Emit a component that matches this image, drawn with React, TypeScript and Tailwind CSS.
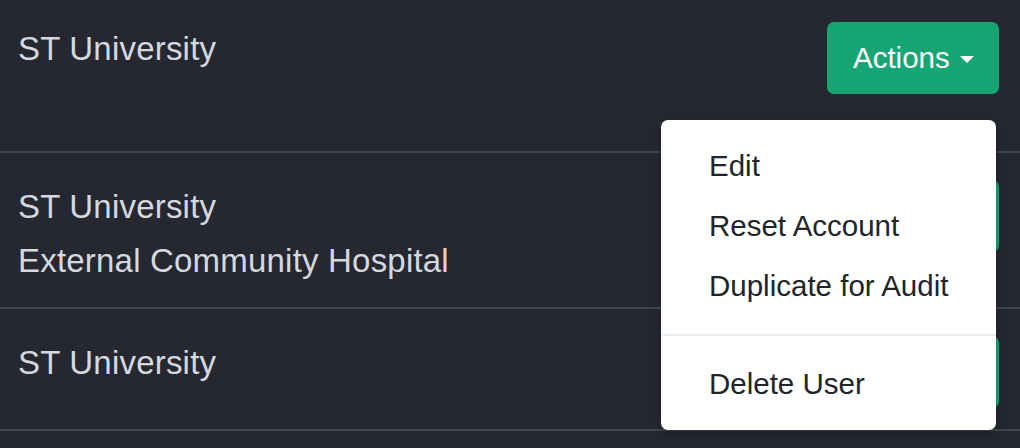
import React from 'react';

const rows = [
  { lines: ['ST University'], h: 'h-[153px] pt-[22px]' },
  { lines: ['ST University', 'External Community Hospital'], h: 'h-[156px] pt-[27px]' },
  { lines: ['ST University'], h: 'h-[122px] pt-[27px]' },
];

function ActionsButton() {
  return (
    <button className="flex h-[72px] w-[172px] items-center rounded-[7px] bg-[#17a673] pl-[26px] text-[29.5px] leading-none text-white">
      <span>Actions</span>
      <span className="ml-[10px] mt-[2px] h-0 w-0 border-x-[7px] border-t-[7px] border-x-transparent border-t-white" />
    </button>
  );
}

export default function App() {
  return (
    <main
      className="relative h-[448px] w-[1020px] overflow-hidden bg-[#252830] text-[#d5d8df]"
      style={{ fontFamily: '"Liberation Sans", Arial, sans-serif' }}
    >
      {rows.map((r, i) => (
        <div key={i} className={`flex items-start justify-between border-b-2 border-[#41454f] pl-[18px] pr-[21px] ${r.h}`}>
          <div className="text-[33px] leading-[54px] tracking-[0.2px]">
            {r.lines.map((l) => (
              <div key={l}>{l}</div>
            ))}
          </div>
          <ActionsButton />
        </div>
      ))}

      {/* open dropdown menu */}
      <div className="absolute left-[661px] top-[120px] w-[335px] rounded-[7px] bg-white py-[16px] text-[29.5px] text-[#212529] shadow-[0_4px_12px_rgba(0,0,0,0.25)]">
        {['Edit', 'Reset Account', 'Duplicate for Audit'].map((t) => (
          <div key={t} className="flex h-[60px] items-center pl-[48px]">
            {t}
          </div>
        ))}
        <div className="my-[18px] h-[2px] bg-[#e9ecef]" />
        <div className="flex h-[60px] items-center pl-[48px]">Delete User</div>
      </div>
    </main>
  );
}
